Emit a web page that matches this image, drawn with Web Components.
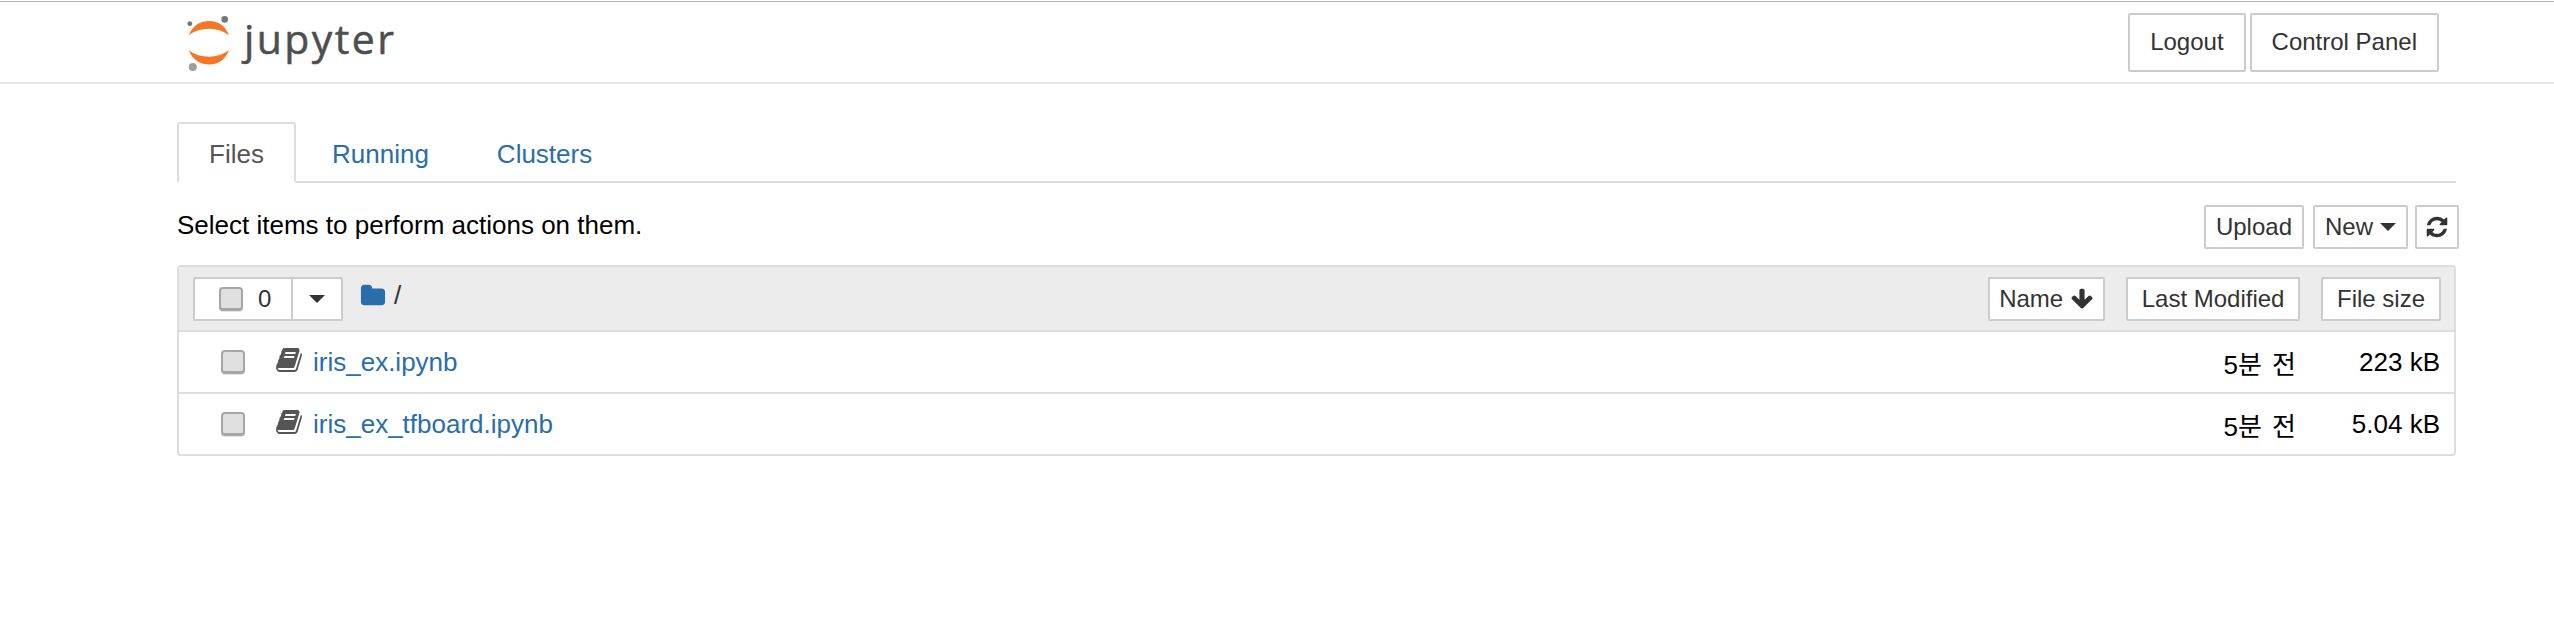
<!DOCTYPE html>
<html>
<head>
<meta charset="utf-8">
<title>Jupyter</title>
<style>
  html, body {
    margin: 0;
    background: #fff;
    font-family: "Liberation Sans", "Noto Sans CJK KR", sans-serif;
    font-size: 26px;
    color: #000;
  }
</style>
</head>
<body>
<jp-header>
  <jp-btn height="59" pad="20">Logout</jp-btn>
  <jp-btn height="59" pad="20">Control Panel</jp-btn>
</jp-header>
<jp-main>
  <jp-tabs></jp-tabs>
  <jp-toolbar></jp-toolbar>
  <jp-list>
    <jp-file-row name="iris_ex.ipynb" modified="5분 전" size="223 kB"></jp-file-row>
    <jp-file-row name="iris_ex_tfboard.ipynb" modified="5분 전" size="5.04 kB"></jp-file-row>
  </jp-list>
</jp-main>

<script>
  const ICONS = {
    folder: "M1728 608v704q0 92-66 158t-158 66h-1216q-92 0-158-66t-66-158v-960q0-92 66-158t158-66h320q92 0 158 66t66 158v32h672q92 0 158 66t66 158z",
    book: "M1703 478q40 57 18 129l-275 906q-19 64-76.5 107.5t-122.5 43.5h-923q-77 0-148.5-53.5t-99.5-131.5q-24-67-2-127 0-4 3-27t4-37q1-8-3-21.5t-3-19.5q2-11 8-21t16.5-23.5 16.5-23.5q23-38 45-91.5t30-91.5q3-10 .5-30t-.5-28q3-11 17-28t17-23q21-36 42-92t25-90q1-9-2.5-32t.5-28q4-13 22-30.5t22-22.5q19-26 42.5-84.5t27.5-96.5q1-8-3-25.5t-2-26.5q2-8 9-18t18-23 17-21q8-12 16.5-30.5t15-35 16-36 19.5-32 26.5-23.5 36-11.5 47.5 5.5l-1 3q38-9 51-9h761q74 0 114 56t18 130l-274 906q-36 119-71.5 153.5t-128.5 34.5h-869q-27 0-38 15-11 16-1 43 24 70 144 70h923q29 0 56-15.5t35-41.5l300-987q7-22 5-57 38 15 59 43zm-1064 2q-4 13 2 22.5t20 9.5h608q13 0 25.5-9.5t16.5-22.5l21-64q4-13-2-22.5t-20-9.5h-608q-13 0-25.5 9.5t-16.5 22.5zm-83 256q-4 13 2 22.5t20 9.5h608q13 0 25.5-9.5t16.5-22.5l21-64q4-13-2-22.5t-20-9.5h-608q-13 0-25.5 9.5t-16.5 22.5z",
    refresh: "M1639 1056q0 5-1 7-64 268-268 434.5t-478 166.5q-146 0-282.5-55t-243.5-157l-129 129q-19 19-45 19t-45-19-19-45v-448q0-26 19-45t45-19h448q26 0 45 19t19 45-19 45l-137 137q71 66 161 102t187 36q134 0 250-65t186-179q11-17 53-117 8-23 30-23h192q13 0 22.5 9.5t9.5 22.5zm25-800v448q0 26-19 45t-45 19h-448q-26 0-45-19t-19-45 19-45l138-138q-148-137-349-137-134 0-250 65t-186 179q-11 17-53 117-8 23-30 23h-199q-13 0-22.5-9.5t-9.5-22.5v-7q65-268 270-434.5t480-166.5q146 0 284 55.5t245 156.5l130-129q19-19 45-19t45 19 19 45z",
    down: "M1675 832q0 53-37 90l-651 652q-39 37-91 37-53 0-90-37l-651-652q-38-36-38-90 0-53 38-91l74-75q39-37 91-37 53 0 90 37l294 294v-704q0-52 38-90t90-38h128q52 0 90 38t38 90v704l294-294q37-37 90-37 52 0 91 37l75 75q37 39 37 91z"
  };

  customElements.define("jp-icon", class extends HTMLElement {
    connectedCallback() {
      const size = this.getAttribute("size") || 20;
      this.attachShadow({ mode: "open" }).innerHTML = `
        <style>
          :host { display: inline-flex; flex: none; }
          svg { display: block; fill: currentColor; }
        </style>
        <svg width="${size}" height="${size}" viewBox="0 0 1792 1792"><path d="${ICONS[this.getAttribute("name")]}"/></svg>`;
    }
  });

  customElements.define("jp-caret", class extends HTMLElement {
    connectedCallback() {
      this.attachShadow({ mode: "open" }).innerHTML = `
        <style>
          :host {
            display: inline-block;
            flex: none;
            width: 0;
            height: 0;
            border-top: 8px solid #333;
            border-left: 8px solid transparent;
            border-right: 8px solid transparent;
          }
        </style>`;
    }
  });

  customElements.define("jp-check", class extends HTMLElement {
    connectedCallback() {
      this.attachShadow({ mode: "open" }).innerHTML = `
        <style>
          :host {
            display: block;
            flex: none;
            box-sizing: border-box;
            width: 24px;
            height: 24px;
            background: #e0e0e0;
            border: 2px solid #a6a6a6;
            border-bottom-width: 3px;
            border-radius: 4px;
            box-shadow: 0 1px 1px #e4e4e4;
          }
        </style>`;
    }
  });

  customElements.define("jp-btn", class extends HTMLElement {
    connectedCallback() {
      const height = this.getAttribute("height") || 44;
      const pad = this.getAttribute("pad") || 10;
      this.attachShadow({ mode: "open" }).innerHTML = `
        <style>
          :host {
            display: inline-flex;
            flex: none;
            align-items: center;
            justify-content: center;
            gap: 7px;
            box-sizing: border-box;
            height: ${height}px;
            padding: 0 ${pad}px;
            background: #fff;
            border: 2px solid #ccc;
            border-radius: 2px;
            color: #333;
            font-size: 24px;
            white-space: nowrap;
          }
        </style>
        <slot></slot>`;
    }
  });

  customElements.define("jp-header", class extends HTMLElement {
    connectedCallback() {
      this.attachShadow({ mode: "open" }).innerHTML = `
        <style>
          :host {
            display: flex;
            align-items: center;
            box-sizing: border-box;
            height: 83px;
            margin-top: 1px;
            padding: 3px 115px 0 187px;
            border-top: 1px solid #b3b3b3;
            border-bottom: 2px solid #e7e7e7;
          }
          svg { display: block; margin-top: -2px; }
          .word {
            margin: -11px 0 0 13px;
            font-family: "Open Sans", sans-serif;
            font-size: 41px;
            letter-spacing: 2.4px;
            line-height: 50px;
            color: #4e4e4e;
            -webkit-text-stroke: 0.5px #4e4e4e;
          }
          .actions { margin-left: auto; display: flex; gap: 4px; margin-top: -3px; }
        </style>
        <svg width="44" height="58" viewBox="187 12 44 58">
          <circle cx="189.8" cy="21.7" r="2.4" fill="#767677"/>
          <circle cx="224.7" cy="17.4" r="3.3" fill="#767677"/>
          <circle cx="192.8" cy="65" r="4" fill="#9e9e9e"/>
          <path d="M188.7 33Q195 19.200 209 19T229 33.200Q220 26.800 209 26.800T188.700 33Z" fill="#f37726"/>
          <path d="M188.7 48.500Q195 62.300 209 62.500T229 48.300Q220 54.700 209 54.700T188.700 48.500Z" fill="#f37726"/>
        </svg>
        <span class="word">jupyter</span>
        <div class="actions"><slot></slot></div>`;
    }
  });

  customElements.define("jp-main", class extends HTMLElement {
    connectedCallback() {
      this.attachShadow({ mode: "open" }).innerHTML = `
        <style>
          :host { display: block; padding: 38px 98px 0 177px; }
        </style>
        <slot></slot>`;
    }
  });

  customElements.define("jp-tabs", class extends HTMLElement {
    connectedCallback() {
      this.attachShadow({ mode: "open" }).innerHTML = `
        <style>
          :host {
            display: flex;
            height: 61px;
            box-sizing: border-box;
            border-bottom: 2px solid #ddd;
            font-size: 26px;
          }
          .tab {
            box-sizing: border-box;
            height: 61px;
            padding: 0 30px;
            margin-right: 4px;
            line-height: 60px;
            color: #296eaa;
            border: 2px solid transparent;
          }
          .active {
            width: 119px;
            padding: 0;
            text-align: center;
            color: #555;
            background: #fff;
            border-color: #ddd;
            border-bottom-color: #fff;
            border-radius: 3px 3px 0 0;
          }
        </style>
        <div class="tab active">Files</div>
        <div class="tab">Running</div>
        <div class="tab">Clusters</div>`;
    }
  });

  customElements.define("jp-toolbar", class extends HTMLElement {
    connectedCallback() {
      this.attachShadow({ mode: "open" }).innerHTML = `
        <style>
          :host {
            display: flex;
            align-items: flex-start;
            height: 82px;
            box-sizing: border-box;
            margin-right: -3px;
          }
          .hint { flex: 1; margin-top: 24px; line-height: 36px; color: #000; }
          .actions { display: flex; align-items: center; margin-top: 22px; }
          .upload { margin-right: 9px; }
          .new { margin-right: 7px; }
        </style>
        <div class="hint">Select items to perform actions on them.</div>
        <div class="actions">
          <jp-btn class="upload" pad="10">Upload</jp-btn>
          <jp-btn class="new" pad="10">New <jp-caret></jp-caret></jp-btn>
          <jp-btn pad="8"><jp-icon name="refresh" size="24"></jp-icon></jp-btn>
        </div>`;
    }
  });

  customElements.define("jp-list", class extends HTMLElement {
    connectedCallback() {
      this.attachShadow({ mode: "open" }).innerHTML = `
        <style>
          :host {
            display: block;
            box-sizing: border-box;
            border: 2px solid #ddd;
            border-radius: 4px;
          }
          .head {
            display: flex;
            align-items: center;
            height: 65px;
            box-sizing: border-box;
            padding: 0 13px 0 14px;
            background: #ececec;
            border-bottom: 2px solid #ddd;
          }
          .select {
            display: flex;
            box-sizing: border-box;
            width: 150px;
            height: 44px;
            background: #fff;
            border: 2px solid #ccc;
            border-radius: 2px;
            color: #333;
            font-size: 24px;
          }
          .count {
            display: flex;
            align-items: center;
            box-sizing: border-box;
            width: 98px;
            padding-left: 24px;
            gap: 15px;
            border-right: 2px solid #ccc;
          }
          .more { flex: 1; display: flex; align-items: center; justify-content: center; }
          .crumb {
            display: flex;
            align-items: center;
            margin: -6px 0 0 17px;
            gap: 8px;
            color: #333;
          }
          .crumb jp-icon { color: #296eaa; }
          .sort { margin-left: auto; display: flex; }
          .sort jp-btn + jp-btn { margin-left: 21px; }
        </style>
        <div class="head">
          <div class="select">
            <div class="count"><jp-check></jp-check><span>0</span></div>
            <div class="more"><jp-caret></jp-caret></div>
          </div>
          <div class="crumb"><jp-icon name="folder" size="26"></jp-icon><span>/</span></div>
          <div class="sort">
            <jp-btn pad="9">Name <jp-icon name="down" size="24"></jp-icon></jp-btn>
            <jp-btn pad="13.5">Last Modified</jp-btn>
            <jp-btn pad="14">File size</jp-btn>
          </div>
        </div>
        <slot></slot>`;
    }
  });

  customElements.define("jp-file-row", class extends HTMLElement {
    connectedCallback() {
      this.attachShadow({ mode: "open" }).innerHTML = `
        <style>
          :host {
            display: flex;
            align-items: center;
            box-sizing: border-box;
            height: 62px;
            padding: 0 14px 0 42px;
            border-bottom: 2px solid #ddd;
          }
          :host(:last-child) { border-bottom: 0; height: 60px; }
          .icon { margin: -4px 0 0 30px; color: #555; }
          a { margin-left: 10px; color: #296eaa; }
          .modified { margin-left: auto; width: 120px; text-align: right; word-spacing: 3px; }
          .size { width: 144px; text-align: right; }
        </style>
        <jp-check></jp-check>
        <jp-icon class="icon" name="book" size="28"></jp-icon>
        <a>${this.getAttribute("name")}</a>
        <span class="modified">${this.getAttribute("modified")}</span>
        <span class="size">${this.getAttribute("size")}</span>`;
    }
  });
</script>
</body>
</html>
